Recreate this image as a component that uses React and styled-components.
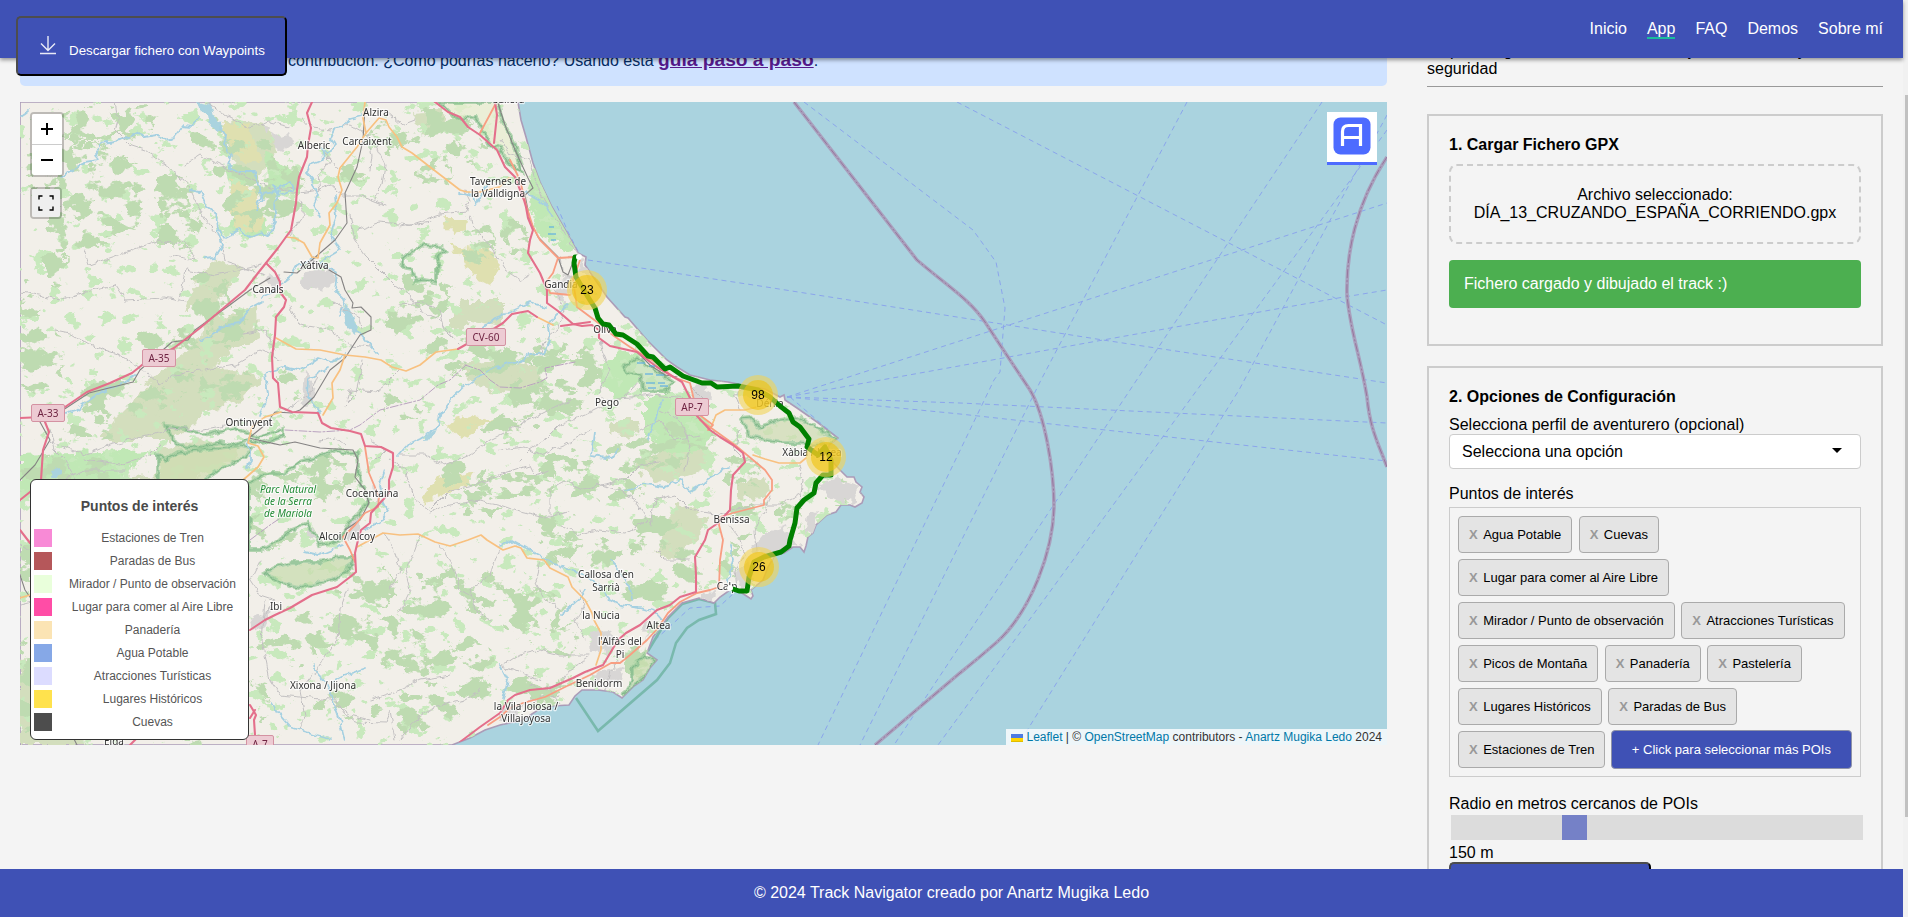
import React from "react";
import styled, { createGlobalStyle } from "styled-components";

const GlobalStyle = createGlobalStyle`
  * { box-sizing: border-box; }
  body {
    margin: 0;
    background: #f4f4f4;
    color: #000;
    font: 16px/18px "Liberation Sans", Arial, sans-serif;
    overflow: hidden;
  }
`;

const Window = styled.div`
  display: flex;
  height: 917px;
  position: relative;
`;
const Page = styled.div`
  display: flex;
  flex-direction: column;
  width: 1903px;
`;
const Header = styled.header`
  flex: none;
  height: 58px;
  background: #3f51b5;
  box-shadow: 0 2px 4px rgba(0, 0, 0, 0.4);
  position: relative;
  z-index: 2;
`;
const Nav = styled.nav`
  display: flex;
  justify-content: flex-end;
  align-items: flex-start;
  gap: 20px;
  padding: 20px 20px 0;
`;
const NavLink = styled.a`
  height: 19px;
  color: #fff;
  text-decoration: none;
  border-bottom: 2px solid ${(p) => (p.$active ? "#1abc9c" : "transparent")};
`;
const DownloadButton = styled.button`
  position: absolute;
  z-index: 3;
  left: 16px;
  top: 16px;
  width: 271px;
  height: 60px;
  padding: 17px 20px 0 21px;
  display: flex;
  align-items: flex-start;
  gap: 12px;
  background: #3f51b5;
  border: 2px outset #000;
  border-color: #4d4d4d #000 #000 #4d4d4d;
  border-radius: 5px;
  color: #fff;
  font: 13.333px/15px "Liberation Sans", Arial, sans-serif;
  white-space: nowrap;
  span { padding-top: 8px; }
  svg { flex: none; }
`;
const Main = styled.main`
  flex: 1;
  display: flex;
  gap: 40px;
  padding: 0 20px;
  overflow: hidden;
`;
const MapColumn = styled.section`
  width: 1367px;
  flex: none;
`;
const Notice = styled.div`
  height: 48px;
  margin: -20px 0 16px;
  padding: 10px 0 0 268px;
  background: #cfe2ff;
  color: #052c65;
  border-radius: 5px;
  line-height: 24px;
  a { color: #551a8b; font-size: 19.2px; font-weight: bold; }
`;
const MapFrame = styled.div`
  position: relative;
  height: 643px;
  overflow: hidden;
  background: #aad3df;
  svg.map { display: block; }
`;
const Control = styled.div`
  position: absolute;
  left: 10px;
  top: ${(p) => p.$top}px;
  border: 2px solid rgba(0, 0, 0, 0.22);
  border-radius: 4px;
  background-clip: padding-box;
  overflow: hidden;
`;
const ZoomButton = styled.div`
  width: 30px;
  height: ${(p) => (p.$first ? 31 : 30)}px;
  background: #fff;
  border-bottom: ${(p) => (p.$first ? "1px solid #ccc" : "none")};
  display: grid;
  place-items: center;
`;
const FullscreenButton = styled.div`
  width: 28px;
  height: 28px;
  background: #efefef;
  display: grid;
  place-items: center;
`;
const Logo = styled.div`
  position: absolute;
  top: 10px;
  right: 10px;
  width: 50px;
  height: 53px;
  padding: 5px 6px;
  background: #fff;
  border-bottom: 3px solid #4d6bff;
`;
const Legend = styled.div`
  position: absolute;
  left: 10px;
  top: 377px;
  width: 219px;
  height: 261px;
  padding: 17px 3px 0;
  border: 1px solid #333;
  border-radius: 6px;
  background: #fff;
  color: #555;
  font-size: 12px;
`;
const LegendTitle = styled.div`
  font-size: 14px;
  font-weight: bold;
  text-align: center;
  color: #4a4a4a;
  margin-bottom: 14px;
`;
const LegendRow = styled.div`
  display: flex;
  gap: 8px;
  margin-bottom: 5px;
  text-align: center;
  span { flex: 1; white-space: nowrap; }
`;
const Swatch = styled.i`
  width: 18px;
  height: 18px;
  background: ${(p) => p.$color};
`;
const Cluster = styled.div`
  position: absolute;
  left: ${(p) => p.$x - 40}px;
  top: ${(p) => p.$y - 122}px;
  width: 40px;
  height: 40px;
  padding: 5px;
  border-radius: 50%;
  background: rgba(241, 211, 87, 0.6);
  b {
    display: block;
    border-radius: 50%;
    background: rgba(240, 194, 12, 0.6);
    text-align: center;
    font: 12px/30px "Liberation Sans", Arial, sans-serif;
  }
`;
const Attribution = styled.div`
  position: absolute;
  right: 0;
  bottom: 0;
  height: 16px;
  padding: 0 5px;
  background: rgba(255, 255, 255, 0.8);
  color: #333;
  font-size: 12px;
  line-height: 16px;
  white-space: nowrap;
  a { color: #0078a8; }
  svg { margin-right: 3px; vertical-align: -1px; }
`;
const Sidebar = styled.aside`
  width: 456px;
  flex: none;
`;
const Intro = styled.p`
  margin: -16px 0 0;
`;
const Rule = styled.div`
  height: 1px;
  margin: 8px 0 27px;
  background: #999;
`;
const Card = styled.section`
  border: 2px solid #ccc;
  padding: 20px;
  margin-bottom: 20px;
`;
const CardTitle = styled.h3`
  margin: 0 0 10px;
  font-size: 16px;
`;
const DropZone = styled.div`
  padding: 20px 0;
  border: 2px dashed #ccc;
  border-radius: 8px;
  text-align: center;
`;
const Success = styled.div`
  margin: 16px 0;
  padding: 15px;
  border-radius: 4px;
  background: #4caf50;
  color: #fff;
`;
const Select = styled.div`
  display: flex;
  align-items: center;
  justify-content: space-between;
  height: 35px;
  margin-bottom: 16px;
  padding: 0 18px 0 12px;
  background: #fff;
  border: 1px solid #ccc;
  border-radius: 4px;
`;
const Caret = styled.i`
  border: 5px solid transparent;
  border-top-color: #000;
  border-bottom: 0;
  margin-top: -2px;
`;
const Chips = styled.div`
  display: flex;
  flex-wrap: wrap;
  gap: 6px 6.4px;
  height: 270px;
  margin: 4px 0 18px;
  padding: 8px 5px 8px 8px;
  border: 1px solid #ccc;
  align-content: flex-start;
  font-size: 13px;
`;
const Chip = styled.div`
  height: 37px;
  padding: 9px 10px 0;
  border: 1px solid #aaa;
  border-radius: 4px;
  background: #e4e4e4;
  b { color: #999; margin-right: 5.5px; }
`;
const MoreButton = styled.button`
  height: 39px;
  margin-top: -1px;
  margin-left: -1px;
  padding: 0 20px;
  background: #3f51b5;
  border: 1px solid #8f93a8;
  border-radius: 4px;
  color: #fff;
  font: 13px "Liberation Sans", Arial, sans-serif;
`;
const Slider = styled.div`
  height: 25px;
  margin: 2px -2px 4px 2px;
  padding-left: 111px;
  background: #dcdcdc;
  i { display: block; width: 25px; height: 25px; background: #7581c7; }
`;
const SubmitButton = styled.button`
  display: block;
  width: 202px;
  height: 50px;
  background: #3f51b5;
  border: 2px solid;
  border-color: #4d4d4d #000 #000 #4d4d4d;
  border-radius: 5px;
  color: #fff;
`;
const Footer = styled.footer`
  flex: none;
  height: 48px;
  line-height: 48px;
  text-align: center;
  color: #fff;
  background: #3f51b5;
  position: relative;
  z-index: 2;
`;
const Scrollbar = styled.div`
  flex: 1;
  padding: 95px 0 0 2px;
  background: #f1f1f1;
  &::after { content: ""; display: block; height: 722px; background: #c1c1c1; }
`;

const legend = [
  ["Estaciones de Tren", "#f88ad6"],
  ["Paradas de Bus", "#b5575a"],
  ["Mirador / Punto de observación", "#e9ffdb"],
  ["Lugar para comer al Aire Libre", "#ff4da6"],
  ["Panadería", "#fbe4b4"],
  ["Agua Potable", "#86a8e7"],
  ["Atracciones Turísticas", "#dcdcff"],
  ["Lugares Históricos", "#ffe24d"],
  ["Cuevas", "#4d4d4d"],
];
const pois = [
  "Agua Potable", "Cuevas", "Lugar para comer al Aire Libre",
  "Mirador / Punto de observación", "Atracciones Turísticas",
  "Picos de Montaña", "Panadería", "Pastelería",
  "Lugares Históricos", "Paradas de Bus", "Estaciones de Tren",
];
const clusters = [[587, 290, 23], [758, 395, 98], [826, 457, 12], [759, 567, 26]];

/* ---- map geometry ---- */
const coast = "518,102 521,120 526,137 533,163 540,182 552,207 567,233 578,253 586,257 585,265 607,297 625,317 628,318 647,340 667,360 677,367 690,375 710,380 728,382 743,385 765,389 780,397 784,395 785,400 797,408 817,422 838,438 829,445 828,453 831,460 840,470 847,477 854,477 856,482 862,487 860,492 864,497 862,503 855,507 850,505 841,505 836,512 827,515 816,525 813,533 808,537 806,546 804,552 800,547 793,547 784,553 775,555 768,567 763,580 751,590 753,596 751,599 745,595 737,590 730,590 720,597 714,603 699,598 682,603 668,617 660,628 653,637 647,653 657,660 650,668 643,680 634,686 622,698 613,692 598,690 582,690 575,696 569,705 552,706 538,710 523,720 500,725 485,730 470,738 452,745 20,745 20,102";

const scrub = [
  "223,120 247,121 270,127 275,160 262,172 250,180 235,165 225,145",
  "215,257 243,267 225,292 210,310 184,310 195,285",
  "257,303 258,338 225,355 210,372 145,385 160,372 200,340 203,325",
  "203,370 235,368 262,380 243,400 205,412 174,440 100,440 120,415 142,393 160,378",
  "460,300 503,300 503,327 472,322 462,312",
  "457,365 500,358 540,367 545,385 520,393 490,390 468,379",
  "612,420 640,420 638,433 625,437 610,433",
  "638,463 665,450 684,443 714,453 708,466 690,475 655,487 645,475",
  "737,480 765,477 770,493 760,500 737,498",
  "665,527 680,503 707,517 703,532 691,543 672,560 655,552",
  "452,310 470,307 468,328 452,330",
  "415,112 440,110 446,125 422,132",
  "20,660 60,650 90,700 85,745 20,745",
  "95,480 160,475 160,450 200,440 235,446 240,455 190,482",
];
const khaki = [
  "230,178 256,190 262,230 240,235 230,210",
  "222,122 250,125 262,160 240,163 228,145",
  "422,497 434,480 475,470 466,487 426,502",
  "446,423 470,415 493,420 478,430 462,440",
  "442,219 468,219 466,232 455,235",
  "450,245 490,250 500,265 488,284 470,275 463,262",
];
// Woodland clusters: centre x, centre y, radius x, radius y
const woods = [
  [95, 125, 50, 18], [108, 195, 42, 42], [85, 225, 35, 28], [75, 165, 50, 22], [30, 330, 14, 45],
  [42, 360, 24, 36], [175, 195, 20, 20], [185, 225, 25, 12], [180, 240, 18, 10], [250, 165, 35, 22],
  [215, 145, 18, 22], [265, 205, 36, 26], [295, 190, 12, 30], [140, 120, 20, 10], [395, 135, 30, 15],
  [450, 125, 25, 14], [470, 150, 20, 12], [435, 175, 20, 12], [480, 240, 18, 22], [520, 240, 12, 18],
  [430, 290, 24, 22], [490, 360, 50, 16], [540, 400, 45, 18],
  [575, 370, 38, 18], [460, 345, 30, 14], [410, 320, 20, 14], [210, 300, 24, 24], [235, 325, 25, 18],
  [170, 350, 32, 20], [215, 385, 40, 18], [130, 400, 50, 18], [90, 430, 35, 12], [70, 470, 45, 10],
  [300, 485, 50, 18], [330, 475, 30, 16], [275, 535, 35, 14], [370, 590, 30, 20],
  [335, 625, 45, 20], [290, 650, 32, 15], [400, 640, 32, 22], [435, 600, 30, 22], [470, 590, 38, 18],
  [430, 660, 38, 18], [350, 700, 30, 12], [420, 712, 45, 18], [480, 670, 28, 28], [540, 690, 28, 14],
  [560, 640, 22, 16], [530, 610, 40, 18], [590, 555, 40, 12], [560, 530, 25, 12], [485, 510, 20, 16],
  [520, 485, 36, 12], [460, 475, 30, 10], [570, 465, 25, 12], [610, 490, 36, 12], [510, 430, 22, 12],
  [650, 455, 42, 18], [690, 435, 28, 14], [660, 535, 28, 18], [745, 520, 14, 18],
  [745, 475, 20, 14], [790, 515, 14, 14], [735, 560, 10, 18], [690, 570, 14, 24], [645, 590, 28, 12],
  [550, 345, 20, 10], [610, 365, 25, 14], [355, 175, 12, 10], [405, 410, 20, 10],
  [295, 380, 10, 18], [45, 560, 24, 30], [60, 265, 12, 14], [840, 490, 14, 13],
  [200, 735, 20, 14], [262, 700, 10, 24], [640, 660, 12, 18], [30, 690, 15, 45],
];
const meadow = [
  "533,168 540,172 560,215 578,250 568,252 540,235 530,205 527,190",
  "618,350 640,355 638,380 623,400 600,385 605,365",
  "645,395 690,393 712,430 705,450 670,455 645,435",
  "20,455 150,450 120,480 20,500",
  "225,165 245,172 250,210 275,230 250,240 230,232 232,200",
  "265,150 300,178 300,195 268,198",
];
const urban = [
  "272,135 290,132 294,145 282,152 270,147", "303,275 330,268 337,280 325,290 305,287",
  "265,278 280,275 284,290 270,290", "555,278 572,275 575,295 560,300", "305,370 314,385 310,405 303,400",
  "762,535 783,525 800,545 765,556 750,550", "818,487 840,478 860,487 855,503 828,497",
  "808,515 818,512 816,530 805,535", "735,575 748,560 752,580 742,590", "690,385 707,383 712,400 693,397",
  "700,592 715,590 714,602 700,598", "590,630 610,628 612,650 592,655", "595,672 625,668 622,680 592,686",
  "352,518 362,512 355,540 342,538", "250,620 275,608 268,622 254,630", "372,487 382,492 378,502",
  "575,250 582,258 592,278 587,280", "645,625 652,622 646,640", "500,708 520,705 515,718 500,720",
  "310,525 316,530 314,540 308,536", "263,125 272,128 268,135",
];
const lakes = [
  "197,102 212,105 216,120 223,128 218,131 210,125 208,115 200,112",
  "345,303 350,312 358,330 355,335 347,328 344,315",
  "425,436 437,429 432,440 423,441", "50,470 60,467 62,474 53,477",
];
const rivers = [
  "200,117 192,126 184,125 175,137 165,139 156,135 145,137 138,132 120,140 102,143 95,153 98,160 85,162 72,170 62,176",
  "220,128 226,135 224,145 232,155 228,165 240,172 255,172 258,185 263,200 256,210",
  "257,205 263,193 278,190 290,182 293,190 280,196 272,185",
  "362,115 350,118 343,127 335,128 330,138 336,146 327,153 322,148 324,160 310,165 306,173 313,180 318,195 313,205 320,218",
  "190,190 200,192 206,206 216,213 218,228 225,238 240,230 252,237 262,233 268,236 276,222 274,205 280,192",
  "217,230 223,245 215,257 203,258", "335,195 337,215 330,235 340,250 320,262 337,272 335,290 345,300 340,315",
  "315,258 297,265 290,278 272,292 262,297", "262,302 247,310 240,323 226,325 212,335 200,340",
  "357,330 365,340 378,355", "345,355 330,362 318,358 308,365 298,370 283,367 265,373 268,395 260,417",
  "328,368 308,380 307,395 320,412", "45,420 75,410 100,393 120,385 135,375",
  "398,457 410,443 420,438 438,427 442,412 452,398 462,388 475,380 490,370 505,365 519,362 530,355 544,353 550,340 548,325 556,315 568,305",
  "480,330 495,318 510,312 530,303 545,308", "385,470 380,485 384,503 388,510 382,520 365,530",
  "248,440 251,455 251,462 247,468", "305,552 318,555 330,550 342,545", "20,118 30,110",
  "500,545 512,540 530,550 550,562 570,570 585,575 600,585 605,597 620,605 640,608 655,612 662,620",
  "610,560 618,568 622,578 630,585 632,600", "272,703 277,712 290,727 310,733 330,738",
  "313,666 325,680 333,700 340,720 345,740", "333,682 345,675 365,668",
  "595,432 592,455 612,458 618,450", "625,490 645,484 665,487 680,480 690,492 705,482 722,470 730,468",
  "585,590 578,600 560,615", "648,440 655,420 662,400", "730,545 733,560 728,580",
  "500,665 508,680 503,700", "460,192 473,195 475,205 490,180", "525,192 540,200 552,215",
];
const minor = [
  "115,102 118,120 115,130 130,145 145,150 165,165 185,180 195,200 205,220 222,240 225,262 265,275",
  "20,292 40,295 60,300 90,290 115,285 125,300 165,298 185,302", "185,165 200,155 220,165 250,178 275,190 295,188",
  "206,102 225,115 250,127 270,122 290,127", "303,118 312,128 330,130 350,125 362,132", "55,330 70,333 90,345 120,355 145,372",
  "170,255 195,260 185,240 175,245 160,240 90,265 85,250", "147,373 160,385 175,375 200,370",
  "315,145 330,160 318,175 320,190 300,193 280,190", "318,190 330,185 342,195 360,195 385,205",
  "300,200 305,215 290,235", "322,150 340,170", "385,110 402,125 415,120", "367,135 372,155 370,170",
  "375,145 385,165 382,185 375,200", "358,230 380,222 410,225 440,215 465,212 470,200 465,190",
  "470,215 472,225 490,245 505,270 520,280 530,275", "350,215 355,240 365,255 380,270 395,285 410,295 420,310 440,320 455,340",
  "400,305 425,303 440,310 445,330 460,345", "400,370 385,385 375,392 350,390 348,400", "363,360 360,375 355,395 345,405",
  "290,307 300,325 330,330 350,345 370,347", "333,302 345,310 360,318 362,330", "280,360 260,350 235,365 205,370",
  "285,412 300,400 312,390 318,375", "370,440 385,450 375,460", "240,422 200,430 170,428 150,435 110,445 85,455 50,442",
  "160,445 150,455 120,465 85,460", "50,430 55,450 65,460 75,480", "390,460 405,470 415,500 430,510 450,490 475,485 500,475",
  "400,455 425,455 445,465 470,455 490,440 520,425 545,412 570,400", "430,512 450,505 480,500 500,505 520,512 545,518 568,512",
  "500,475 515,470 530,465 535,475 550,470", "420,535 415,550 405,570 410,590 400,610", "383,533 395,550 400,570 390,590",
  "500,550 490,575 470,590 475,610 490,620", "440,545 455,570 460,590 475,600", "540,560 535,580 545,600 560,610",
  "260,560 250,580 260,595 275,600 262,620", "265,600 262,640 270,680 280,695 310,698 330,700 350,715 370,720",
  "347,590 340,610 338,640 325,655 315,675", "335,697 345,715 355,722 385,723 390,710 395,740",
  "312,675 300,690 305,715 300,730", "400,740 420,715 440,705 465,700 480,690", "370,700 400,690 420,680 450,675",
  "605,405 585,415 560,425 545,440 530,450 520,460", "607,400 630,398 650,395 690,398", "607,405 600,390 610,370 602,350 600,338",
  "625,397 640,380", "500,450 525,447 540,455 565,445 590,430", "640,430 660,420 675,440 700,435", "660,410 680,420 690,445 685,470",
  "550,515 550,490 565,480 585,490 600,485 620,490 635,500 648,520 625,533 600,530 580,535 560,525",
  "600,485 625,480 640,465 660,462", "650,525 655,500 675,495 690,510 720,515", "655,550 665,560 690,560",
  "720,515 750,505 780,505 800,495", "757,550 755,530 765,510 770,495", "800,465 803,480 800,500", "737,590 735,570 745,555 740,540 730,525",
  "740,430 735,450 745,460", "695,420 710,405 700,395 690,385", "740,410 735,395 745,387", "590,655 560,655 540,650 520,655 505,665",
  "590,657 570,670 560,685 535,690", "585,640 575,620 585,605 580,590", "560,705 550,690 530,685", "620,660 610,672 605,690",
  "500,665 520,672 540,680", "500,140 510,155 530,160 535,180 545,205 560,225 575,250", "400,227 430,222",
  "240,335 265,330 275,350", "45,560 20,545", "20,605 40,600", "60,480 85,470 125,470", "180,300 185,270 215,275 240,270 262,265",
  "555,290 565,310 558,330 545,340 540,355", "562,270 560,258 575,257", "573,275 562,275", "345,445 335,437 320,440", "510,715 530,700 560,695",
];
const orange = [
  "365,102 363,118 366,133 379,118 386,120 389,127 397,137 402,147 412,153 430,167 447,180 460,190 467,192 480,192 499,187 509,178",
  "366,133 357,147 340,168 338,177 342,190 337,203 329,213 330,225 320,243 318,258 312,257 304,243 295,238 286,237",
  "276,338 296,349 320,350 345,355 365,357 381,360 392,367 406,371 420,365 436,352 458,349",
  "345,355 340,370 332,383 333,398 323,415", "281,412 265,417 252,427 248,443 258,446 264,457 258,467 243,480",
  "357,547 370,540 383,533 400,535 418,534 435,542 450,546 468,540 481,535 487,540 503,550 515,546 521,548 527,558 544,560 550,568 568,577 572,587 585,600 592,613 594,620 601,633 601,650 596,665",
  "712,425 716,415 725,410 745,410 757,407", "753,455 765,459 779,463 800,463 806,458", "537,317 553,325", "20,598 30,595",
];
const salmon = [
  "495,105 487,120 480,133", "510,160 520,180 526,205 533,227 540,240 558,258 575,257", "558,258 553,273 546,282 550,293 570,295",
  "580,260 573,280 577,307 597,322 614,336 630,347 655,362 673,377 690,383 697,413 713,425 708,430",
  "700,420 714,430 735,445 753,460 765,470 772,480 772,490 764,500 764,505 733,513 720,517 719,525 723,540 720,560 719,587 710,590 697,593 680,602 668,613 658,628 647,640 630,655 620,663 611,663 590,675 565,687 545,697 523,703 510,708 500,717 488,725",
  "365,447 367,460 369,473 379,497 378,507 365,513 355,525 343,537 350,550 355,562",
];
const pink = [
  "312,102 307,113 311,128 308,145 307,157 299,177 297,190 296,203 291,230 278,248 266,263 258,273 245,290 233,300 200,328 174,348 142,365 132,373 110,383 87,392 65,407 43,417 20,418",
  "45,422 49,432 43,450 41,480 30,492 20,500", "20,530 30,543",
  "266,263 275,272 280,282 280,292 286,300 284,307 276,317 275,335 272,357 273,378 278,383 280,407 292,412 318,413 322,423 331,428 350,431 361,434 365,446 381,447 393,453 393,467 389,480 389,493 380,503 371,513 370,523 361,530 358,540 355,553 356,572 350,577 337,587 312,595 290,608 275,615 265,620 250,630",
  "435,102 448,112 460,117 468,127 480,135 497,150 505,167 515,177 524,200 526,207 528,218 533,230 530,240 528,253 540,273 547,290 547,303 558,311 573,324 582,326 592,325 599,330 599,338 610,346 637,352 657,367 682,382 690,398 697,416 710,430 720,437 733,445 743,453 745,462 733,475 731,490 730,510 718,523 708,530 705,540 695,557 696,575 696,592 680,597 670,605 657,610 640,625 626,633 618,640 603,665 585,672 573,678 550,688 530,690 515,695 508,700 500,713 480,727 460,742",
  "495,102 497,115 494,143", "458,349 495,328 503,323 512,314 528,311 537,317", "561,326 590,322", "250,705 256,715 254,720 255,735", "250,718 255,710", "130,745 137,738",
];
const rails = [
  "365,108 363,140 357,167 345,193 347,223 335,240 312,260 297,273 284,272", "270,278 250,290 227,307 195,330 188,340 172,342 140,370 133,382 89,393 60,412",
  "60,412 40,422 50,440 35,465 20,480", "20,575 25,590 32,600", "72,735 77,745",
  "498,103 505,125 515,150 528,178 533,188 525,195 530,220 538,237 558,257 563,272 568,275 573,262",
  "637,352 650,365 665,375 677,377", "312,260 341,277 345,290 353,303 352,308 361,307 371,317 371,330 360,335 345,358 330,370 314,397 300,410 292,413 275,412 265,425 249,438",
  "249,438 280,445 295,442 320,448 353,450 358,460 355,477 365,490 369,503 360,520 345,530",
];
const regional = ["465,365 480,370 490,380 500,387 520,388 540,382 547,378 545,368 575,362", "250,540 270,525 285,515", "285,430 320,432 350,430 360,425 380,410 400,405 420,400 438,385 450,380 466,365"];
const parks = [
  { d: "249,483 265,474 284,474 300,462 320,456 337,450 350,453 357,452 359,480 365,490 369,500 360,513 349,523 340,540 320,545 318,540 308,523 290,530 280,540 262,550 249,550", f: "none" },
  { d: "264,573 275,567 292,562 320,562 340,557 353,557 350,567 345,573 330,580 302,588 280,582", f: "#c8dcaf" },
  { d: "158,490 158,455 165,460 178,452 200,450 243,445 252,448 245,457 219,470 210,476 198,483", f: "#cfdcb2" },
  { d: "166,426 180,428 205,435 215,432 235,428 260,438 283,428 284,436 262,444 250,440 235,445 220,442 200,448 180,445 172,440", f: "none" },
  { d: "403,258 413,250 425,245 440,247 445,252 436,258 440,265 436,270 436,282 425,280 415,281 413,270 402,268", f: "none" },
  { d: "741,418 750,417 760,427 780,420 798,418 818,428 838,440 828,443 814,445 800,443 783,443 765,440 749,435", f: "#cfddb4" },
  { d: "623,367 637,357 650,367 673,382 666,391 643,391 641,375 626,372", f: "#c3e3b8" },
  { d: "440,102 455,118 475,117 480,125 490,145 500,148 510,165 522,172 515,145 502,120 498,102", f: "#e8eed0" },
  { d: "622,697 632,680 632,668 645,655 655,661 644,678", f: "#c8dcaf" },
];
const ferries = [
  "804,102 973,230 996,262 1005,308 1000,372 994,380 818,745", "957,102 1387,325", "1187,102 1041,380 860,745",
  "1322,102 1130,390 894,745", "1387,130 1197,390 960,715 938,745", "1387,115 1349,185 1239,390 1018,745",
  "588,260 760,286 1103,340 1387,383", "787,397 1009,325 1242,250 1387,203", "787,397 1103,340 1338,298 1387,290",
  "787,397 960,403 1387,423", "787,397 960,414 1387,461", "790,397 838,438", "557,206 568,232 580,255", "655,640 690,608 720,606 735,592",
];
const borders = [
  "M794 102L917 260C950 288 970 300 985 322C1000 345 1020 375 1030 390C1045 415 1054 470 1054 507C1053 550 1032 610 997 642Q980 657 960 673L875 745",
  "M1387 157C1355 205 1346 255 1347 295C1350 330 1360 355 1367 397C1370 430 1379 445 1387 467",
];
const track = "579,257 575,257 574,263 576,277 582,287 588,297 595,308 598,318 603,324 609,325 616,334 623,335 637,344 648,356 653,357 665,369 670,367 683,376 702,383 711,383 717,387 738,386 758,390 770,397 780,406 789,413 793,422 800,427 809,439 807,447 818,455 825,447 831,460 831,475 823,475 816,483 814,493 804,500 797,508 795,523 790,540 789,546 781,552 764,557 754,562 749,577 747,591 739,591 730,588";
const labels = [
  [376, 116, "Alzira"], [314, 149, "Alberic"], [367, 145, "Carcaixent"], [508, 103, "Cullera"],
  [498, 185, "Tavernes de"], [498, 197, "la Valldigna"], [314.5, 269, "Xàtiva"], [268, 293, "Canals"],
  [561, 288, "Gandia"], [605, 333, "Oliva"], [607, 406, "Pego"], [249, 426, "Ontinyent"],
  [372, 497, "Cocentaina"], [347, 540, "Alcoi / Alcoy"], [276, 610, "Ibi"], [606, 578, "Callosa d'en"],
  [606, 591, "Sarrià"], [731.5, 523, "Benissa"], [770, 407, "Dénia"], [812, 456, "Xàbia / Jávea"],
  [727, 590, "Calp"], [601, 619, "la Nucia"], [658.5, 629, "Altea"], [620, 645, "l'Alfàs del"],
  [620, 658, "Pi"], [599, 687, "Benidorm"], [526, 710, "la Vila Joiosa /"], [526, 722, "Villajoyosa"],
  [323, 689, "Xixona / Jijona"], [114, 745, "Elda"],
];
const shields = [[142, 349, 34, "A-35"], [31, 404, 34, "A-33"], [466, 328, 40, "CV-60"], [675, 398, 34, "AP-7"], [246, 735, 28, "A-7"]];

const Lines = ({ data, ...rest }) => (
  <g fill="none" strokeLinejoin="round" strokeLinecap="round" {...rest}>
    {data.map((d) => <polyline key={d} points={d} />)}
  </g>
);
const Areas = ({ data, ...rest }) => (
  <g {...rest}>{data.map((d) => <polygon key={d} points={d} />)}</g>
);

function TerrainMap() {
  return (
    <svg className="map" width="1367" height="643" viewBox="20 102 1367 643">
      <defs>
        <clipPath id="land"><polygon points={coast} /></clipPath>
        <filter id="patches" x="20" y="102" width="860" height="643" filterUnits="userSpaceOnUse" colorInterpolationFilters="sRGB">
          <feTurbulence type="fractalNoise" baseFrequency="0.045 0.06" numOctaves="5" seed="8" result="n" />
          <feColorMatrix in="n" values="0 0 0 0 0  0 0 0 0 0  0 0 0 0 0  26 0 0 0 -13.1" result="m" />
          <feDisplacementMap in="SourceGraphic" in2="n" scale="35" xChannelSelector="R" yChannelSelector="G" result="s" />
          <feComposite in="s" in2="m" operator="in" />
        </filter>
        <filter id="specks" x="20" y="102" width="860" height="643" filterUnits="userSpaceOnUse" colorInterpolationFilters="sRGB">
          <feTurbulence type="fractalNoise" baseFrequency="0.06 0.08" numOctaves="5" seed="31" />
          <feColorMatrix values="0 0 0 0 0  0 0 0 0 0  0 0 0 0 0  24 0 0 0 -15" result="m" />
          <feComposite in="SourceGraphic" in2="m" operator="in" />
        </filter>
        <filter id="ragged" x="0" y="90" width="900" height="670" filterUnits="userSpaceOnUse" colorInterpolationFilters="sRGB">
          <feTurbulence type="fractalNoise" baseFrequency="0.09" numOctaves="3" seed="4" result="n" />
          <feDisplacementMap in="SourceGraphic" in2="n" scale="14" xChannelSelector="R" yChannelSelector="G" />
        </filter>
        <filter id="wiggle" x="0" y="90" width="900" height="670" filterUnits="userSpaceOnUse" colorInterpolationFilters="sRGB">
          <feTurbulence type="fractalNoise" baseFrequency="0.12" numOctaves="2" seed="7" result="n" />
          <feDisplacementMap in="SourceGraphic" in2="n" scale="7" xChannelSelector="R" yChannelSelector="G" />
        </filter>
      </defs>
      <Lines data={ferries} stroke="#8ba5ec" strokeDasharray="5 4" strokeLinecap="butt" />
      <g fill="none">
        {borders.map((d) => <path key={d} d={d} stroke="#a9a0bd" strokeWidth="3.6" />)}
        {borders.map((d) => <path key={d} d={d} stroke="#97769d" strokeWidth="1" strokeDasharray="9 2 2 2" />)}
      </g>
      <polyline points="576,698 598,731 657,680 670,663 676,643 687,628 699,620 716,614 715,603 699,599 682,604 668,618 648,651" fill="none" stroke="#79b9ad" strokeWidth="2.6" />
      <polygon points={coast} fill="#f2efe9" stroke="#ab9cb8" strokeWidth="1.6" />
      <g clipPath="url(#land)">
        <g filter="url(#ragged)">
          <Areas data={scrub} fill="#d3debd" />
          <Areas data={meadow} fill="#c0e8b5" />
          <Areas data={khaki} fill="#dfe0b0" />
        </g>
        <rect x="20" y="102" width="860" height="643" fill="#c8e9bd" filter="url(#specks)" />
        <g filter="url(#patches)" fill="#bedbb1">
          {woods.map(([x, y, rx, ry], i) => <ellipse key={i} cx={x} cy={y} rx={rx} ry={ry} />)}
        </g>
        <Areas data={urban} fill="#d8d6d5" filter="url(#ragged)" />
        <g filter="url(#wiggle)">
          {parks.map((p) => (
            <g key={p.d}>
              <polygon points={p.d} fill={p.f} stroke="#9ccb9b" strokeWidth="4" opacity=".75" />
              <polygon points={p.d} fill="none" stroke="#79b384" strokeWidth="1.2" opacity=".8" />
            </g>
          ))}
          <Areas data={lakes} fill="#aad3df" />
          <Lines data={minor} stroke="#c2c0c1" strokeWidth="1" />
          <Lines data={rivers} stroke="#a5d0e1" strokeWidth="1.8" />
        </g>
        <Lines data={regional} stroke="#b9a3bf" strokeDasharray="8 2 2 2" />
        <Lines data={rails} stroke="#858383" strokeWidth="1.1" />
        <Lines data={orange} stroke="#f8c180" strokeWidth="1.7" />
        <Lines data={salmon} stroke="#f89e82" strokeWidth="1.8" />
        <Lines data={pink} stroke="#e46f8b" strokeWidth="2.1" />
        <path d="M637 363h8m4 3h6m-10 8h8m3 1h8m-18 8h9m3 0h7m-17 5h8m4-2h8M549 227h5m-6 7h8m-5 6h5" stroke="#4aa4e8" />
      </g>
      {shields.map(([x, y, w, t]) => (
        <g key={t}>
          <rect x={x + 0.5} y={y + 0.5} width={w - 1} height="17" rx="1.5" fill="#edcbd3" stroke="#d492a2" />
          <text x={x + w / 2} y={y + 12.6} textAnchor="middle" fill="#6f2342" fontFamily="Noto Sans, sans-serif" fontSize="10">{t}</text>
        </g>
      ))}
      <g fontFamily="Noto Sans, sans-serif" fontSize="10" textAnchor="middle" fill="#333" stroke="#fff" strokeOpacity=".7" strokeWidth="2.4" paintOrder="stroke" strokeLinejoin="round">
        {labels.map(([x, y, t]) => <text key={t} x={x} y={y}>{t}</text>)}
        <g fontStyle="italic" fill="#218a35">
          <text x="288" y="493">Parc Natural</text>
          <text x="288" y="505">de la Serra</text>
          <text x="288" y="517">de Mariola</text>
        </g>
      </g>
      <polyline points={track} fill="none" stroke="#008000" strokeWidth="5" strokeLinejoin="round" strokeLinecap="round" />
      <circle cx="579" cy="257" r="3" fill="#fff" />
      <circle cx="730" cy="588" r="3" fill="#fff" />
    </svg>
  );
}

export default function App() {
  return (
    <Window>
      <GlobalStyle />
      <Page>
        <Header>
          <Nav>
            {["Inicio", "App", "FAQ", "Demos", "Sobre mí"].map((t) => (
              <NavLink key={t} $active={t === "App"}>{t}</NavLink>
            ))}
          </Nav>
        </Header>
        <DownloadButton>
          <svg width="18" height="20" viewBox="0 0 18 20" fill="none" stroke="#e9ebf7" strokeWidth="1.4">
            <path d="M9 1v14M2 8.5l7 7 7-7M1 18.5h16" />
          </svg>
          <span>Descargar fichero con Waypoints</span>
        </DownloadButton>
        <Main>
          <MapColumn>
            <Notice>
              contribución. ¿Cómo podrías hacerlo? Usando esta <a href="#guia">guía paso a paso</a>.
            </Notice>
            <MapFrame>
              <TerrainMap />
              {clusters.map(([x, y, n]) => <Cluster key={n} $x={x} $y={y}><b>{n}</b></Cluster>)}
              <Control $top={10}>
                <ZoomButton $first>
                  <svg width="14" height="14" stroke="#000" strokeWidth="2"><path d="M1 7h12M7 1v12" /></svg>
                </ZoomButton>
                <ZoomButton>
                  <svg width="14" height="14" stroke="#000" strokeWidth="2"><path d="M1 7h12" /></svg>
                </ZoomButton>
              </Control>
              <Control $top={85}>
                <FullscreenButton>
                  <svg width="16" height="16" fill="none" stroke="#000" strokeWidth="1.4"><path d="M1 4.5V1h3.5M11.5 1H15v3.5M15 11.5V15h-3.5M4.5 15H1v-3.5" /></svg>
                </FullscreenButton>
              </Control>
              <Legend>
                <LegendTitle>Puntos de interés</LegendTitle>
                {legend.map(([t, c]) => (
                  <LegendRow key={t}><Swatch $color={c} /><span>{t}</span></LegendRow>
                ))}
              </Legend>
              <Logo>
                <svg width="38" height="38" fill="none">
                  <rect x=".5" y=".5" width="37" height="37" rx="7" fill="#4d6bff" />
                  <path d="M9.5 29V14.5Q9.5 8.5 15.5 8.5H27.5V29M9.5 20.5H27" stroke="#fff" strokeWidth="3.2" />
                </svg>
              </Logo>
              <Attribution>
                <svg width="12" height="8"><path fill="#4c7be1" d="M0 0h12v4H0z" /><path fill="#ffd500" d="M0 4h12v3H0z" /><path fill="#e0bc00" d="M0 7h12v1H0z" /></svg>
                <a>Leaflet</a> | © <a>OpenStreetMap</a> contributors - <a>Anartz Mugika Ledo</a> 2024
              </Attribution>
            </MapFrame>
          </MapColumn>
          <Sidebar>
            <Intro>Es para seguir el recorrido con la mejor información y<br />seguridad</Intro>
            <Rule />
            <Card>
              <CardTitle>1. Cargar Fichero GPX</CardTitle>
              <DropZone>Archivo seleccionado:<br />DÍA_13_CRUZANDO_ESPAÑA_CORRIENDO.gpx</DropZone>
              <Success>Fichero cargado y dibujado el track :)</Success>
            </Card>
            <Card>
              <CardTitle>2. Opciones de Configuración</CardTitle>
              <div>Selecciona perfil de aventurero (opcional)</div>
              <Select>Selecciona una opción<Caret /></Select>
              <div>Puntos de interés</div>
              <Chips>
                {pois.map((t) => <Chip key={t}><b>X</b>{t}</Chip>)}
                <MoreButton>+ Click para seleccionar más POIs</MoreButton>
              </Chips>
              <div>Radio en metros cercanos de POIs</div>
              <Slider><i /></Slider>
              <div>150 m</div>
              <SubmitButton />
            </Card>
          </Sidebar>
        </Main>
        <Footer>© 2024 Track Navigator creado por Anartz Mugika Ledo</Footer>
      </Page>
      <Scrollbar />
    </Window>
  );
}
